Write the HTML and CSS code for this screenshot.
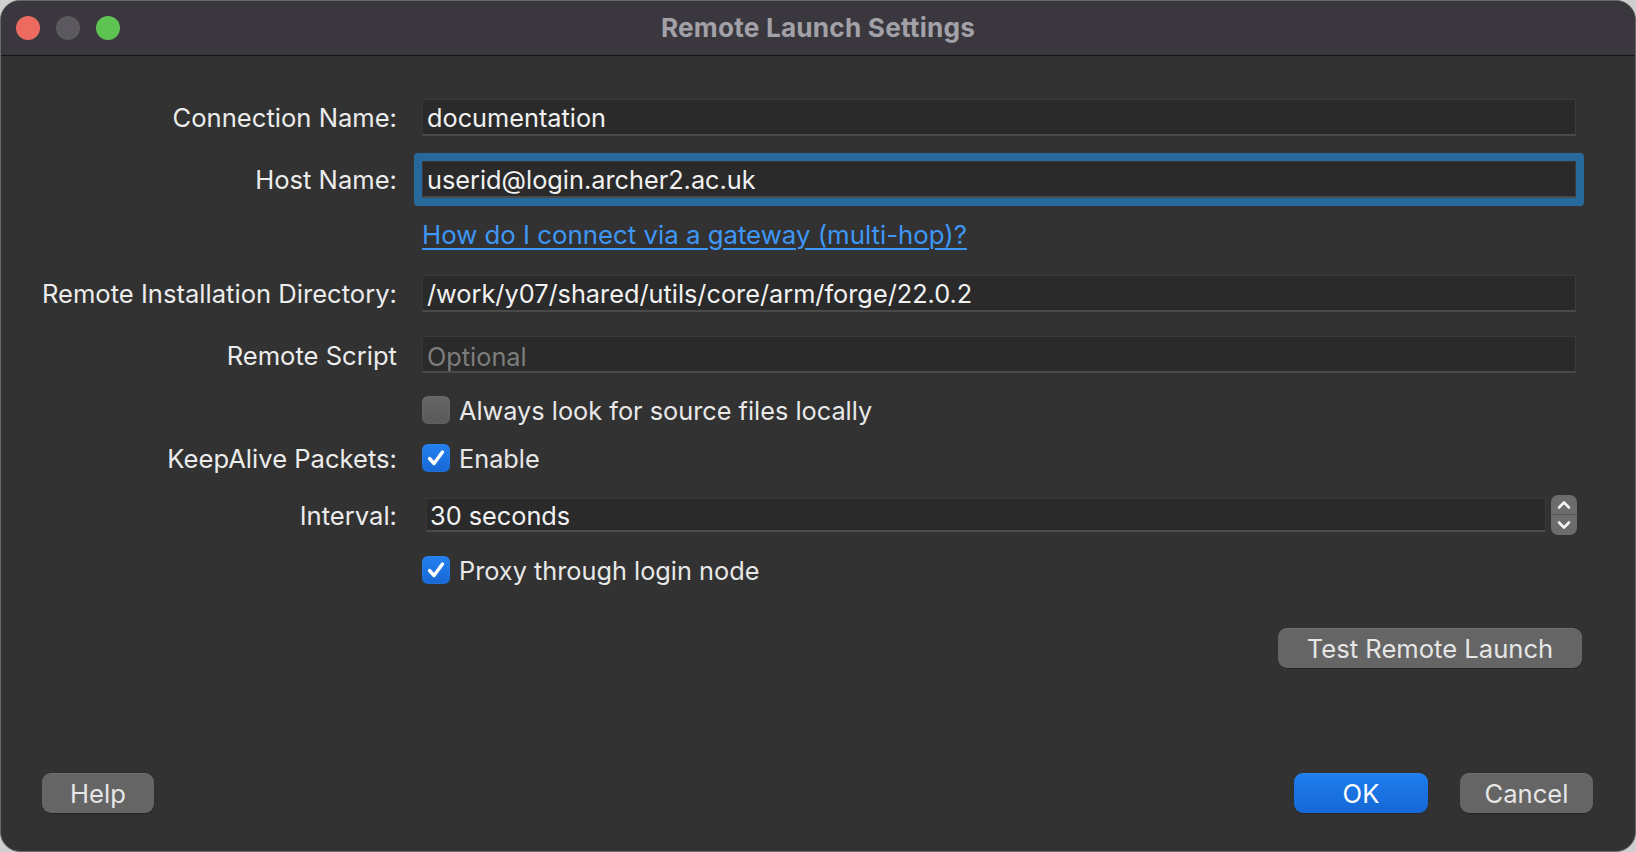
FILE: index.html
```html
<!DOCTYPE html>
<html lang="en">
<head>
<meta charset="utf-8">
<title>Remote Launch Settings</title>
<link rel="stylesheet" href="styles.css">
</head>
<body>
<div class="window">
  <header class="titlebar">
    <div class="lights">
      <span class="light red"></span>
      <span class="light gray"></span>
      <span class="light green"></span>
    </div>
    <div class="title">Remote Launch Settings</div>
    <div class="tb-spacer"></div>
  </header>
  <main class="content">
    <div class="row r-conn">
      <div class="label">Connection Name:</div>
      <div class="control"><div class="field"><span class="value">documentation</span></div></div>
    </div>
    <div class="row r-host">
      <div class="label">Host Name:</div>
      <div class="control"><div class="field focused"><span class="value">userid@login.archer2.ac.uk</span></div></div>
    </div>
    <div class="row r-link">
      <div class="label"></div>
      <div class="control"><a class="link" href="#">How do I connect via a gateway (multi-hop)?</a></div>
    </div>
    <div class="row r-dir">
      <div class="label">Remote Installation Directory:</div>
      <div class="control"><div class="field"><span class="value">/work/y07/shared/utils/core/arm/forge/22.0.2</span></div></div>
    </div>
    <div class="row r-script">
      <div class="label">Remote Script</div>
      <div class="control"><div class="field"><span class="value placeholder">Optional</span></div></div>
    </div>
    <div class="row r-always">
      <div class="label"></div>
      <div class="control check-control">
        <span class="checkbox"></span>
        <span class="check-text">Always look for source files locally</span>
      </div>
    </div>
    <div class="row r-keep">
      <div class="label">KeepAlive Packets:</div>
      <div class="control check-control">
        <span class="checkbox checked"><svg viewBox="0 0 28 28" width="28" height="28"><path d="M7.5 14.5 L12 19.5 L20.5 8" fill="none" stroke="#fff" stroke-width="3.4" stroke-linecap="round" stroke-linejoin="round"/></svg></span>
        <span class="check-text">Enable</span>
      </div>
    </div>
    <div class="row r-interval">
      <div class="label">Interval:</div>
      <div class="control interval-control">
        <div class="field interval-field"><span class="value">30 seconds</span></div>
        <div class="spinner">
          <span class="spin up"><svg viewBox="0 0 26 20" width="26" height="20"><path d="M8 12.5 L13 7.5 L18 12.5" fill="none" stroke="#f2f2f2" stroke-width="2.6" stroke-linecap="round" stroke-linejoin="round"/></svg></span>
          <span class="spin down"><svg viewBox="0 0 26 20" width="26" height="20"><path d="M8 7.5 L13 12.5 L18 7.5" fill="none" stroke="#f2f2f2" stroke-width="2.6" stroke-linecap="round" stroke-linejoin="round"/></svg></span>
        </div>
      </div>
    </div>
    <div class="row r-proxy">
      <div class="label"></div>
      <div class="control check-control">
        <span class="checkbox checked"><svg viewBox="0 0 28 28" width="28" height="28"><path d="M7.5 14.5 L12 19.5 L20.5 8" fill="none" stroke="#fff" stroke-width="3.4" stroke-linecap="round" stroke-linejoin="round"/></svg></span>
        <span class="check-text">Proxy through login node</span>
      </div>
    </div>
    <div class="test-row">
      <button class="btn test">Test Remote Launch</button>
    </div>
    <footer class="footer">
      <button class="btn help">Help</button>
      <div class="footer-spacer"></div>
      <button class="btn primary ok">OK</button>
      <button class="btn cancel">Cancel</button>
    </footer>
  </main>
</div>
</body>
</html>
```

FILE: styles.css
```css
* { box-sizing: border-box; }

html, body {
  margin: 0;
  padding: 0;
  width: 1636px;
  height: 852px;
  background: #cfcfcf;
  overflow: hidden;
}

body {
  font-family: "Inter", "Liberation Sans", sans-serif;
  font-size: 25.6px;
  color: #e8e8e8;
}

.window {
  width: 1636px;
  height: 852px;
  background: #323232;
  border: 1px solid #6a6a6a;
  border-radius: 20px;
  overflow: hidden;
  display: flex;
  flex-direction: column;
}

.titlebar {
  height: 55px;
  flex: none;
  background: #3a383e;
  border-bottom: 1px solid #141414;
  display: grid;
  grid-template-columns: 1fr auto 1fr;
  align-items: center;
}

.lights {
  display: flex;
  gap: 16px;
  padding-left: 15px;
}

.light {
  width: 24px;
  height: 24px;
  border-radius: 50%;
}
.light.red { background: #ec6a5f; }
.light.gray { background: #5b595f; }
.light.green { background: #5fc354; }

.title {
  font-weight: 700;
  font-size: 26.2px;
  color: #a3a1a8;
  letter-spacing: 0.2px;
  padding-bottom: 2px;
}

.content {
  flex: 1;
  display: flex;
  flex-direction: column;
  gap: 23px;
  padding: 41px 0 38px 0;
}

.row {
  display: flex;
  align-items: center;
}

.r-conn { height: 40px; }
.r-host { height: 38px; }
.r-link { height: 28px; margin-top: -1px; margin-bottom: 3px; }
.r-dir { height: 38px; }
.r-script { height: 41px; }
.r-always { height: 22px; }
.r-keep { height: 28px; }
.r-interval { height: 40px; }
.r-proxy { height: 26px; margin-top: -1px; margin-bottom: 1px; }

.label {
  width: 396px;
  flex: none;
  text-align: right;
  color: #ececec;
  white-space: nowrap;
}

.control {
  flex: 1;
  margin-left: 25px;
  margin-right: 59px;
  min-width: 0;
}

.r-script .control { align-self: flex-start; padding-top: 1px; }

.field {
  height: 37px;
  background: #2a2a2a;
  border-top: 1px solid #393939;
  border-left: 1px solid #363636;
  border-right: 1px solid #3c3c3c;
  border-bottom: 2px solid #4a4a4a;
  display: flex;
  align-items: center;
  padding-left: 4px;
  padding-top: 2px;
}

.r-script .field { padding-top: 4px; }

.field.focused {
  box-shadow: 0 0 0 8px #27699a;
  border-radius: 1px;
}

.value {
  color: #f2f2f2;
  white-space: nowrap;
  font-size: 25.3px;
}

.value.placeholder { color: #7d7d7d; }

.link {
  color: #3e97f6;
  font-size: 25.8px;
  text-decoration: underline;
  text-decoration-thickness: 2px;
  text-underline-offset: 4px;
  white-space: nowrap;
}

.check-control {
  display: flex;
  align-items: center;
  gap: 9px;
}

.checkbox {
  width: 28px;
  height: 28px;
  flex: none;
  border-radius: 6px;
  background: linear-gradient(#666666, #5a5a5a);
  box-shadow: inset 0 0 0 1px rgba(255,255,255,0.04);
  display: flex;
  align-items: center;
  justify-content: center;
}

.checkbox.checked {
  background: linear-gradient(#2382f0, #1766d4);
}

.checkbox svg { display: block; }

.check-text {
  color: #e8e8e8;
  white-space: nowrap;
  font-size: 25.3px;
}

.interval-control {
  display: flex;
  align-items: center;
  margin-right: 58px;
}

.interval-field {
  flex: 1;
  margin-left: 4px;
  height: 34px;
  padding-left: 3px;
}

.spinner {
  width: 26px;
  height: 40px;
  margin-left: 5px;
  flex: none;
  border-radius: 7px;
  background: #6c6c6c;
  display: flex;
  flex-direction: column;
  overflow: hidden;
}

.spin {
  height: 20px;
  display: block;
}
.spin svg { display: block; }
.spin.up { border-bottom: 1px solid #565656; height: 20px; }
.spin.down { height: 19px; }

.test-row {
  display: flex;
  justify-content: flex-end;
  padding-right: 53px;
  margin-top: 21px;
}

.btn {
  font-family: inherit;
  font-size: 25.6px;
  height: 40px;
  border: none;
  border-radius: 9px;
  background: #656565;
  color: #e6e6e6;
  padding: 0;
  box-shadow: 0 1px 1px rgba(0,0,0,0.25), inset 0 1px 0 rgba(255,255,255,0.06);
}

.btn.test { width: 304px; }

.footer {
  margin-top: auto;
  display: flex;
  align-items: center;
  padding: 0 42px 0 41px;
}

.footer-spacer { flex: 1; }

.btn.help { width: 112px; }
.btn.ok { width: 134px; margin-right: 32px; }
.btn.cancel { width: 133px; }

.btn.primary {
  background: linear-gradient(#1f7ded, #1668d6);
  color: #ffffff;
}
```
